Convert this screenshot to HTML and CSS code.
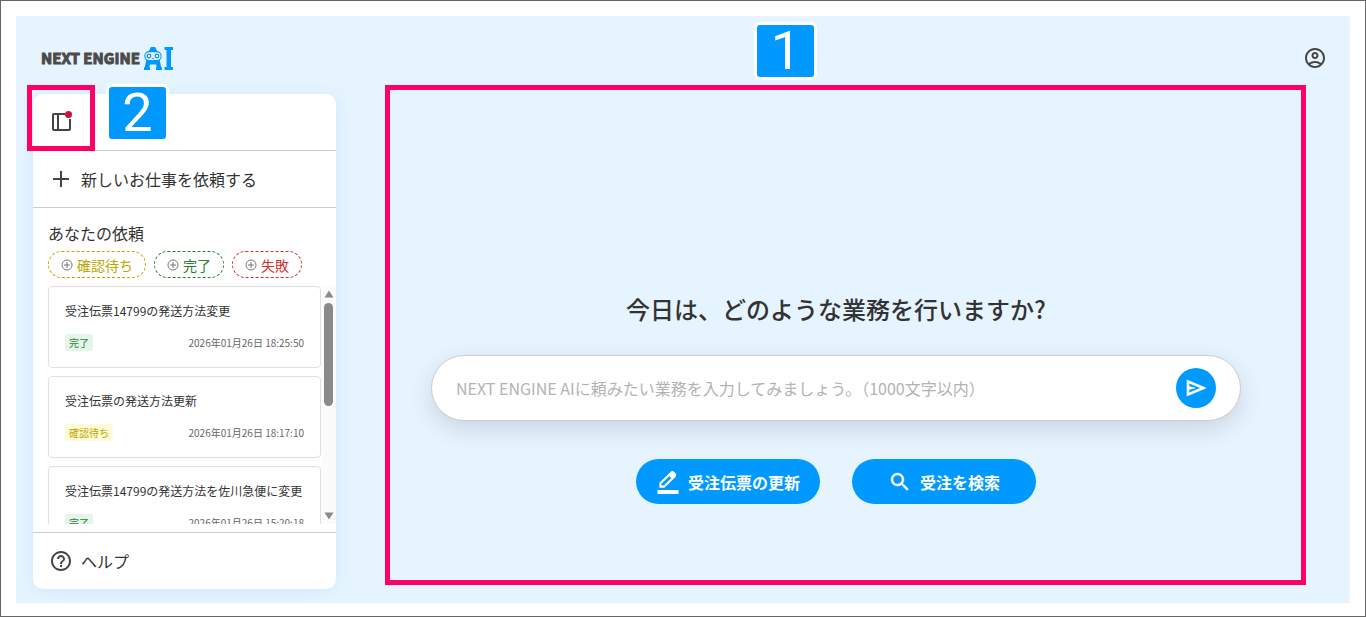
FILE: index.html
```html
<!DOCTYPE html>
<html lang="ja">
<head>
<meta charset="utf-8">
<title>NEXT ENGINE AI</title>
<link rel="stylesheet" href="styles.css">
</head>
<body>
<div class="app">
  <header class="header">
    <a class="logo" href="#" aria-label="NEXT ENGINE AI">
      <span class="logo-text">NEXT ENGINE</span>
      <svg class="logo-mark" viewBox="0 0 29 23" aria-hidden="true">
        <path fill="#0099ff" d="M4.500 5 6.200 1.200Q6.500 0 7.500 0h3q1 0 1.300 1.200L13.500 5zM2.500 12h13l1.700 8.200H18V23h-6v-2.800h.7L12 17.500H6l-.7 2.700H6V23H0v-2.800h.8z"/>
        <rect x=".8" y="4.600" width="16.400" height="9" rx="4.500" fill="#e6f4ff" stroke="#0099ff" stroke-width="1.100"/>
        <circle cx="5" cy="9" r="1.800" fill="#fff" stroke="#0099ff" stroke-width="1.300"/>
        <circle cx="13" cy="9" r="1.800" fill="#fff" stroke="#0099ff" stroke-width="1.300"/>
        <path d="M7.800 11.200q1.200.9 2.400 0" fill="none" stroke="#0099ff" stroke-width=".8"/>
        <path fill="#0099ff" d="M20.500 0H29v3h-2v17h2v3h-8.500v-3h2V3h-2z"/>
      </svg>
    </a>
    <button class="icon-button" type="button" aria-label="アカウント">
      <svg class="icon" viewBox="0 0 24 24"><path d="M12 2C6.480 2 2 6.480 2 12s4.480 10 10 10 10-4.480 10-10S17.520 2 12 2zM7.350 18.500C8.660 17.560 10.260 17 12 17s3.340.56 4.650 1.500c-1.310.94-2.910 1.500-4.650 1.500s-3.340-.56-4.650-1.500zm10.790-1.380C16.450 15.800 14.320 15 12 15s-4.450.8-6.140 2.120C4.700 15.730 4 13.950 4 12c0-4.420 3.580-8 8-8s8 3.580 8 8c0 1.950-.7 3.730-1.860 5.120zM12 6c-1.930 0-3.500 1.570-3.500 3.500S10.070 13 12 13s3.500-1.570 3.500-3.500S13.930 6 12 6zm0 5c-.83 0-1.500-.67-1.500-1.500S11.170 8 12 8s1.500.67 1.500 1.500S12.830 11 12 11z"/></svg>
    </button>
  </header>

  <div class="body">
    <aside class="sidebar">
      <div class="row">
        <button class="icon-button" type="button" aria-label="サイドバーを閉じる">
          <svg class="icon" viewBox="0 0 24 24">
            <path d="M16 4H5a1 1 0 0 0-1 1v14a1 1 0 0 0 1 1h15a1 1 0 0 0 1-1V9M9 4v16" fill="none" stroke="#444" stroke-width="2"/>
            <circle cx="19.500" cy="4.500" r="3.500" fill="#d50f3c"/>
          </svg>
        </button>
      </div>
      <button class="row row-button" type="button">
        <svg class="icon" viewBox="0 0 24 24"><path d="M11 4h2v7h7v2h-7v7h-2v-7H4v-2h7z"/></svg>
        新しいお仕事を依頼する
      </button>

      <section class="requests">
        <h2 class="requests-title">あなたの依頼</h2>
        <div class="chips">
          <button class="chip chip-wait" type="button"><svg class="chip-icon" viewBox="0 0 12 12"><path d="M6 3v6M3 6h6"/><circle cx="6" cy="6" r="5"/></svg>確認待ち</button>
          <button class="chip chip-done" type="button"><svg class="chip-icon" viewBox="0 0 12 12"><path d="M6 3v6M3 6h6"/><circle cx="6" cy="6" r="5"/></svg>完了</button>
          <button class="chip chip-fail" type="button"><svg class="chip-icon" viewBox="0 0 12 12"><path d="M6 3v6M3 6h6"/><circle cx="6" cy="6" r="5"/></svg>失敗</button>
        </div>
        <div class="scroller">
          <ul class="cards">
            <li class="card">
              <p class="card-title">受注伝票14799の発送方法変更</p>
              <div class="card-meta"><span class="tag tag-done">完了</span><time>2026年01月26日 18:25:50</time></div>
            </li>
            <li class="card">
              <p class="card-title">受注伝票の発送方法更新</p>
              <div class="card-meta"><span class="tag tag-wait">確認待ち</span><time>2026年01月26日 18:17:10</time></div>
            </li>
            <li class="card">
              <p class="card-title">受注伝票14799の発送方法を佐川急便に変更</p>
              <div class="card-meta"><span class="tag tag-done">完了</span><time>2026年01月26日 15:20:18</time></div>
            </li>
          </ul>
          <div class="scrollbar" aria-hidden="true">
            <svg class="arrow" viewBox="0 0 10 8"><path d="M5 0.500 9.500 7.500H.5z"/></svg>
            <div class="track"><div class="thumb"></div></div>
            <svg class="arrow" viewBox="0 0 10 8"><path d="M5 7.500.5.500h9z"/></svg>
          </div>
        </div>
      </section>

      <button class="row row-button row-help" type="button">
        <svg class="icon" viewBox="0 0 24 24"><path d="M11 18h2v-2h-2v2zm1-16C6.480 2 2 6.480 2 12s4.480 10 10 10 10-4.480 10-10S17.520 2 12 2zm0 18c-4.410 0-8-3.590-8-8s3.590-8 8-8 8 3.590 8 8-3.590 8-8 8zm0-14c-2.210 0-4 1.790-4 4h2c0-1.100.9-2 2-2s2 .9 2 2c0 2-3 1.750-3 5h2c0-2.250 3-2.500 3-5 0-2.210-1.790-4-4-4z"/></svg>
        ヘルプ
      </button>
      <div class="marker marker-menu"><span class="badge badge-menu">2</span></div>
    </aside>

    <main class="main">
      <h1 class="question">今日は、どのような業務を行いますか?</h1>
      <form class="prompt">
        <input class="prompt-input" type="text" aria-label="依頼内容" placeholder="NEXT ENGINE AIに頼みたい業務を入力してみましょう。（1000文字以内）">
        <button class="send" type="button" aria-label="送信">
          <svg class="send-icon" viewBox="0 -960 960 960"><path d="M120-160v-640l760 320-760 320Zm80-120 474-200-474-200v140l240 60-240 60v140Z"/></svg>
        </button>
      </form>
      <div class="actions">
        <button class="action" type="button">
          <svg class="action-icon" viewBox="0 0 24 24"><path d="M1.500 20h21v4h-21z"/><path d="M4.500 16.700v-3.400L15.200 2.700a1.600 1.600 0 0 1 2.200 0l1.300 1.300a1.600 1.600 0 0 1 0 2.200L8 16.700z" fill="none" stroke="#fff" stroke-width="2.200"/><path d="m12.500 5.400 2.600-2.600q1.900-1.600 3.100-.5l1 1q1.200 1.300-.5 3.100L16.100 9z"/></svg>
          受注伝票の更新
        </button>
        <button class="action" type="button">
          <svg class="action-icon" viewBox="0 0 24 24"><path d="M15.500 14h-.79l-.28-.27C15.410 12.590 16 11.110 16 9.500 16 5.910 13.090 3 9.500 3S3 5.910 3 9.500 5.910 16 9.500 16c1.610 0 3.090-.59 4.230-1.570l.27.28v.79l5 4.990L20.490 19l-4.990-5zm-6 0C7.010 14 5 11.990 5 9.500S7.010 5 9.500 5 14 7.010 14 9.500 11.990 14 9.500 14z" stroke="#fff" stroke-width=".4"/></svg>
          受注を検索
        </button>
      </div>
      <div class="marker marker-main"><span class="badge badge-main">1</span></div>
    </main>
  </div>
</div>
</body>
</html>
```

FILE: styles.css
```css
*,
*::before,
*::after {
  box-sizing: border-box;
}

body {
  margin: 0;
  height: 100vh;
  min-height: 560px;
  padding: 15px 15px 13px;
  display: flex;
  border: 1px solid #666;
  background: #fff;
  color: #333;
  font-family: "Noto Sans CJK JP", "Noto Sans", sans-serif;
  font-size: 16px;
}

h1,
h2,
p,
ul {
  margin: 0;
  padding: 0;
}

button,
input {
  font: inherit;
  color: inherit;
  border: 0;
  background: none;
  padding: 0;
}

button {
  cursor: pointer;
}

.app {
  flex: 1;
  display: flex;
  flex-direction: column;
  min-width: 0;
  background: #e6f4ff;
}

.header {
  flex: none;
  display: flex;
  align-items: center;
  justify-content: space-between;
  height: 78px;
  padding: 6px 23px 0 25px;
}

.logo {
  display: flex;
  align-items: center;
  gap: 4px;
  color: #4a4a4a;
  text-decoration: none;
}

.logo-text {
  font-size: 15px;
  font-weight: 700;
  line-height: 24px;
  -webkit-text-stroke: 1px #4a4a4a;
}

.logo-mark {
  width: 29px;
  height: 23px;
}

.icon-button {
  display: flex;
}

.icon {
  width: 24px;
  height: 24px;
  fill: #444;
}

.body {
  flex: 1;
  display: flex;
  min-height: 0;
  padding: 0 14px 14px 17px;
}

.sidebar {
  position: relative;
  display: flex;
  flex-direction: column;
  width: 303px;
  border-radius: 10px;
  background: #fff;
  box-shadow: 0 2px 16px rgba(0, 140, 255, 0.1);
}

.row {
  flex: none;
  display: flex;
  align-items: center;
  gap: 8px;
  height: 57px;
  padding: 0 16px;
  border-bottom: 1px solid #ccc;
}

.row-button {
  width: 100%;
  text-align: left;
}

.row-help {
  border-top: 1px solid #ccc;
  border-bottom: 0;
}

.requests {
  flex: 1;
  display: flex;
  flex-direction: column;
  min-height: 0;
  padding: 13px 0 8px 15px;
}

.requests-title {
  font-size: 16px;
  font-weight: 400;
  line-height: 24px;
}

.chips {
  display: flex;
  gap: 8px;
  margin: 6px 0 8px;
}

.chip {
  display: flex;
  align-items: center;
  gap: 4px;
  height: 27px;
  padding: 0 12px;
  border: 1px dashed;
  border-radius: 14px;
  font-size: 14px;
  line-height: 20px;
}

.chip-icon {
  width: 12px;
  height: 12px;
  fill: none;
  stroke: #777;
}

.chip-wait {
  color: #bba800;
}

.chip-done {
  color: #2e7d32;
}

.chip-fail {
  color: #d32f2f;
}

.scroller {
  flex: 1;
  display: flex;
  min-height: 0;
}

.cards {
  flex: 1;
  display: flex;
  flex-direction: column;
  gap: 8px;
  overflow: hidden;
  list-style: none;
}

.card {
  flex: none;
  display: flex;
  flex-direction: column;
  gap: 14px;
  height: 82px;
  padding: 15px 16px;
  border: 1px solid #e0e0e0;
  border-radius: 4px;
}

.card-title {
  font-size: 12px;
  line-height: 18px;
  white-space: nowrap;
}

.card-meta {
  display: flex;
  align-items: center;
  justify-content: space-between;
  color: #666;
  font-size: 10px;
  line-height: 17px;
}

.tag {
  padding: 0 4px;
  border-radius: 2px;
}

.tag-done {
  background: #e6f5ea;
  color: #2e7d32;
}

.tag-wait {
  background: #fffbd6;
  color: #bba800;
}

.scrollbar {
  display: flex;
  flex-direction: column;
  align-items: center;
  gap: 5px;
  width: 15px;
  padding: 4px 0;
  background: #fbfbfb;
}

.arrow {
  width: 10px;
  height: 8px;
  fill: #8a8a8a;
}

.track {
  flex: 1;
}

.thumb {
  width: 9px;
  height: 103px;
  border-radius: 5px;
  background: #8a8a8a;
}

.main {
  position: relative;
  flex: 1;
  display: flex;
  flex-direction: column;
  align-items: center;
  min-width: 0;
  padding: 197px 48px 0;
}

.question {
  font-size: 24px;
  font-weight: 500;
  line-height: 36px;
}

.prompt {
  display: flex;
  align-items: center;
  width: 100%;
  max-width: 810px;
  height: 66px;
  margin: 28px 0 38px;
  padding: 0 24px;
  border: 1px solid #ccc;
  border-radius: 33px;
  background: #fff;
  box-shadow: 0 8px 24px rgba(0, 0, 0, 0.12);
}

.prompt-input {
  flex: 1;
  min-width: 0;
  height: 40px;
  outline: 0;
}

.prompt-input::placeholder {
  color: #b3b3b3;
}

.send {
  display: flex;
  align-items: center;
  justify-content: center;
  width: 40px;
  height: 40px;
  border-radius: 50%;
  background: #0099ff;
}

.send-icon {
  width: 24px;
  height: 24px;
  fill: #fff;
  stroke: #fff;
  stroke-width: 24;
}

.actions {
  display: flex;
  gap: 32px;
}

.action {
  display: flex;
  align-items: center;
  justify-content: center;
  gap: 8px;
  width: 184px;
  height: 45px;
  border-radius: 23px;
  background: #0099ff;
  color: #fff;
  font-weight: 700;
}

.action-icon {
  width: 24px;
  height: 24px;
  fill: #fff;
}

.marker {
  position: absolute;
  border: 5px solid #ff0066;
  pointer-events: none;
}

.marker-menu {
  top: -9px;
  left: -6px;
  width: 68px;
  height: 66px;
}

.marker-main {
  top: -9px;
  right: 30px;
  bottom: 4px;
  left: 49px;
}

.badge {
  position: absolute;
  display: flex;
  align-items: center;
  justify-content: center;
  width: 63px;
  height: 58px;
  border: 3px solid #fff;
  border-radius: 6px;
  background: #0099ff;
  color: #fff;
  font-family: Roboto, sans-serif;
  font-size: 54px;
  line-height: 52px;
}

.badge-menu {
  top: -6px;
  left: 74px;
}

.badge-main {
  top: -68px;
  left: 40%;
}
```
